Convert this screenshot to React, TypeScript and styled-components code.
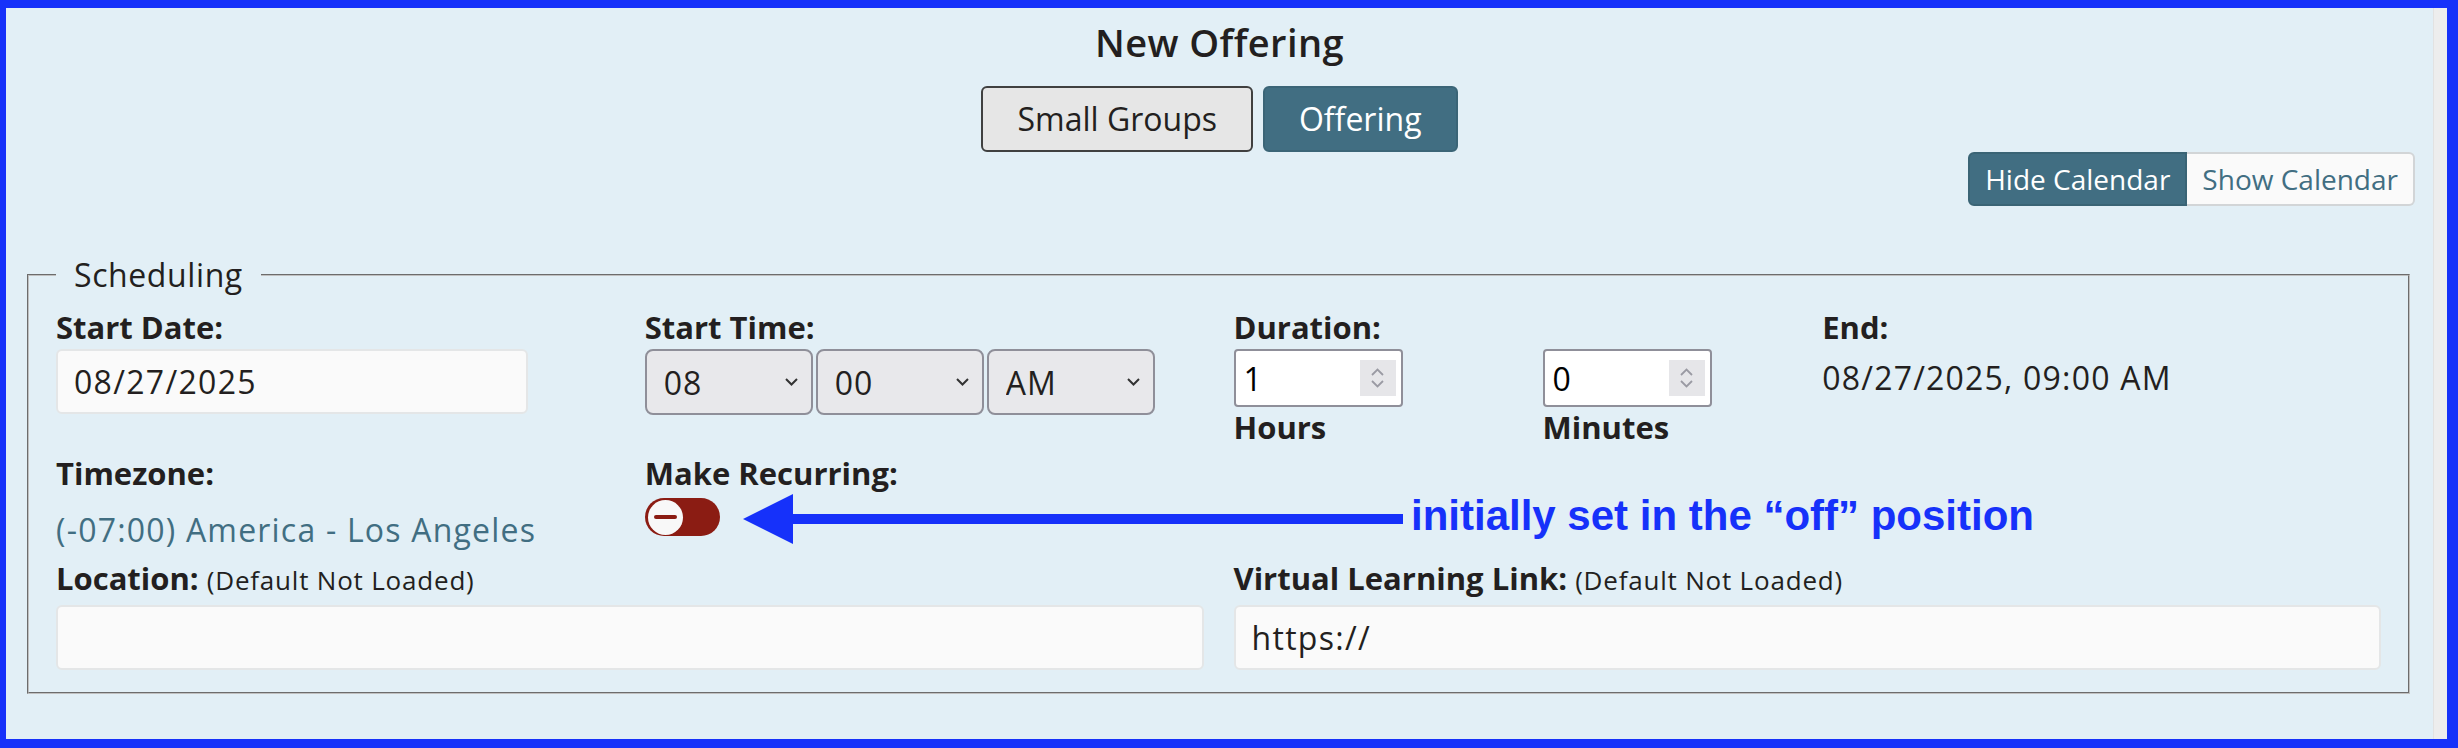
import React from "react";
import styled, { createGlobalStyle } from "styled-components";

const GlobalStyle = createGlobalStyle`
  html, body {
    margin: 0;
    padding: 0;
  }
  body {
    font-family: "Open Sans", "Liberation Sans", sans-serif;
    color: #231f20;
  }
  * {
    box-sizing: border-box;
  }
`;

const Frame = styled.div`
  position: relative;
  width: 2458px;
  height: 748px;
  border-style: solid;
  border-color: #1631fa;
  border-width: 8px 11px 9px 6px;
  display: flex;
  overflow: hidden;
`;

const Page = styled.main`
  flex: 1;
  min-width: 0;
  background: #e2eff6;
  display: flex;
  flex-direction: column;
`;

const ScrollTrack = styled.div`
  width: 14px;
  background: #ededed;
  border-left: 1px solid #e2e2e2;
`;

const Header = styled.header`
  display: flex;
  flex-direction: column;
  align-items: center;
  padding-top: 12px;
`;

const Title = styled.h1`
  margin: 0;
  font-size: 38px;
  line-height: 44px;
  font-weight: 600;
  letter-spacing: 0.4px;
  color: #231f20;
`;

const ModeGroup = styled.div`
  display: flex;
  gap: 10px;
  margin-top: 22px;
`;

const ModeButton = styled.button<{ $active?: boolean }>`
  font-family: inherit;
  font-size: 32px;
  line-height: 36px;
  padding: 13px 34px;
  border-radius: 6px;
  border: 2px solid ${(p) => (p.$active ? "#3b6577" : "#404040")};
  background: ${(p) => (p.$active ? "#416e82" : "#e6e6e6")};
  color: ${(p) => (p.$active ? "#ffffff" : "#231f20")};
`;

const CalendarBar = styled.div`
  display: flex;
  justify-content: flex-end;
  padding-right: 18px;
`;

const CalendarButton = styled.button<{ $active?: boolean }>`
  font-family: inherit;
  font-size: 28px;
  line-height: 34px;
  padding: 8px 15px;
  border: 2px solid ${(p) => (p.$active ? "#3a6475" : "#d2d5d7")};
  background: ${(p) => (p.$active ? "#416e82" : "#fafafa")};
  color: ${(p) => (p.$active ? "#ffffff" : "#416e82")};

  &:first-child {
    border-radius: 6px 0 0 6px;
  }
  &:last-child {
    border-left: none;
    border-radius: 0 6px 6px 0;
  }
`;

const Scheduling = styled.fieldset`
  margin: 51px 23px 0 21px;
  padding: 16px 27px 22px;
  border: 2px groove rgb(192, 192, 192);
  min-width: 0;
`;

const Legend = styled.legend`
  padding: 0 18px;
  font-size: 32px;
  line-height: 36px;
  letter-spacing: 0.6px;
  color: #231f20;
`;

const FieldGrid = styled.div<{ $cols: number; $gapBelow?: number }>`
  display: grid;
  grid-template-columns: repeat(${(p) => p.$cols}, 1fr);
  column-gap: 30px;
  margin-bottom: ${(p) => p.$gapBelow ?? 0}px;
`;

const DurationRow = styled.div`
  display: flex;
  gap: 140px;
`;

const Field = styled.div`
  display: flex;
  flex-direction: column;
  align-items: flex-start;
  min-width: 0;
`;

const Label = styled.label`
  display: block;
  font-size: 31px;
  line-height: 36px;
  font-weight: 700;
  color: #231f20;
  white-space: nowrap;
`;

const Note = styled.span`
  font-size: 26px;
  font-weight: 400;
  letter-spacing: 0.8px;
`;

const TextInput = styled.input<{ $width?: string; $gap?: number }>`
  display: block;
  width: ${(p) => p.$width ?? "100%"};
  height: 65px;
  margin-top: ${(p) => p.$gap ?? 4}px;
  padding: 0 16px;
  font-family: inherit;
  font-size: 32px;
  letter-spacing: 1.3px;
  color: #231f20;
  background: #fafafa;
  border: 2px solid #e4e6e7;
  border-radius: 6px;
  outline: none;
`;

const SelectRow = styled.div`
  display: flex;
  gap: 3px;
  margin-top: 4px;
`;

const SelectWrap = styled.div`
  position: relative;
  width: 168px;
`;

const Select = styled.select`
  appearance: none;
  width: 100%;
  height: 66px;
  padding: 0 40px 0 17px;
  font-family: inherit;
  font-size: 32px;
  letter-spacing: 1px;
  color: #231f20;
  background: #e8e8eb;
  border: 2px solid #8f8f99;
  border-radius: 8px;
  outline: none;
`;

const Chevron = styled.svg`
  position: absolute;
  right: 15px;
  top: 50%;
  transform: translateY(-50%);
  pointer-events: none;
`;

const NumberBox = styled.div`
  display: flex;
  align-items: center;
  width: 169px;
  height: 58px;
  margin-top: 4px;
  padding: 0 5px 0 8px;
  background: #ffffff;
  border: 2px solid #8f8f99;
  border-radius: 4px;
`;

const NumberInput = styled.input`
  flex: 1;
  min-width: 0;
  padding: 0;
  border: none;
  outline: none;
  background: transparent;
  font-family: inherit;
  font-size: 32px;
  color: #000000;
  appearance: textfield;

  &::-webkit-inner-spin-button,
  &::-webkit-outer-spin-button {
    -webkit-appearance: none;
    margin: 0;
  }
`;

const Spinner = styled.span`
  width: 36px;
  height: 36px;
  background: #e6e6e9;
  display: flex;
  flex-direction: column;
  align-items: center;
  justify-content: center;
  gap: 4px;
`;

const SubLabel = styled(Label)`
  margin-top: 2px;
`;

const Value = styled.div<{ $color?: string; $gap: number }>`
  margin-top: ${(p) => p.$gap}px;
  font-size: 32px;
  line-height: 36px;
  letter-spacing: 1.2px;
  color: ${(p) => p.$color ?? "#231f20"};
  white-space: nowrap;
`;

const Toggle = styled.button`
  width: 75px;
  height: 38px;
  margin-top: 7px;
  padding: 0 0 0 3px;
  border: none;
  border-radius: 19px;
  background: #8b1c13;
  display: flex;
  align-items: center;
`;

const Knob = styled.span`
  width: 35px;
  height: 35px;
  border-radius: 50%;
  background: #f8f8f8;
  display: flex;
  align-items: center;
  justify-content: center;
`;

const Minus = styled.span`
  width: 23px;
  height: 4px;
  border-radius: 2px;
  background: #8b1c13;
`;

const ArrowMark = styled.svg`
  position: absolute;
  left: 737px;
  top: 486px;
`;

const Callout = styled.div`
  position: absolute;
  left: 1405px;
  top: 484px;
  font-family: "Liberation Sans", Arial, sans-serif;
  font-weight: 700;
  font-size: 42px;
  line-height: 48px;
  color: #1631fa;
  white-space: nowrap;
`;

const ChevronDown = () => (
  <Chevron width="13" height="9" viewBox="0 0 13 9">
    <path d="M1 1.5 L6.5 7 L12 1.5" fill="none" stroke="#333" strokeWidth="2" />
  </Chevron>
);

interface TimeSelectProps {
  value: string;
  options: string[];
}

const TimeSelect = ({ value, options }: TimeSelectProps) => (
  <SelectWrap>
    <Select defaultValue={value}>
      {options.map((o) => (
        <option key={o}>{o}</option>
      ))}
    </Select>
    <ChevronDown />
  </SelectWrap>
);

const SpinIcons = () => (
  <Spinner>
    <svg width="13" height="8" viewBox="0 0 13 8">
      <path d="M1 7 L6.5 1.5 L12 7" fill="none" stroke="#9a9aa3" strokeWidth="1.8" />
    </svg>
    <svg width="13" height="8" viewBox="0 0 13 8">
      <path d="M1 1 L6.5 6.5 L12 1" fill="none" stroke="#9a9aa3" strokeWidth="1.8" />
    </svg>
  </Spinner>
);

const hours = ["01", "02", "03", "04", "05", "06", "07", "08", "09", "10", "11", "12"];
const minutes = ["00", "15", "30", "45"];

const App = () => (
  <>
    <GlobalStyle />
    <Frame>
      <Page>
        <Header>
          <Title>New Offering</Title>
          <ModeGroup>
            <ModeButton>Small Groups</ModeButton>
            <ModeButton $active>Offering</ModeButton>
          </ModeGroup>
        </Header>

        <CalendarBar>
          <CalendarButton $active>Hide Calendar</CalendarButton>
          <CalendarButton>Show Calendar</CalendarButton>
        </CalendarBar>

        <Scheduling>
          <Legend>Scheduling</Legend>

          <FieldGrid $cols={4} $gapBelow={10}>
            <Field>
              <Label>Start Date:</Label>
              <TextInput $width="472px" defaultValue="08/27/2025" />
            </Field>
            <Field>
              <Label>Start Time:</Label>
              <SelectRow>
                <TimeSelect value="08" options={hours} />
                <TimeSelect value="00" options={minutes} />
                <TimeSelect value="AM" options={["AM", "PM"]} />
              </SelectRow>
            </Field>
            <DurationRow>
              <Field>
                <Label>Duration:</Label>
                <NumberBox>
                  <NumberInput type="number" defaultValue={1} />
                  <SpinIcons />
                </NumberBox>
                <SubLabel>Hours</SubLabel>
              </Field>
              <Field>
                <Label>&nbsp;</Label>
                <NumberBox>
                  <NumberInput type="number" defaultValue={0} />
                  <SpinIcons />
                </NumberBox>
                <SubLabel>Minutes</SubLabel>
              </Field>
            </DurationRow>
            <Field>
              <Label>End:</Label>
              <Value $gap={15}>08/27/2025, 09:00 AM</Value>
            </Field>
          </FieldGrid>

          <FieldGrid $cols={4} $gapBelow={12}>
            <Field>
              <Label>Timezone:</Label>
              <Value $gap={21} $color="#416e82">
                (-07:00) America - Los Angeles
              </Value>
            </Field>
            <Field>
              <Label>Make Recurring:</Label>
              <Toggle aria-label="Make Recurring">
                <Knob>
                  <Minus />
                </Knob>
              </Toggle>
            </Field>
          </FieldGrid>

          <FieldGrid $cols={2}>
            <Field>
              <Label>
                Location: <Note>(Default Not Loaded)</Note>
              </Label>
              <TextInput $gap={7} />
            </Field>
            <Field>
              <Label>
                Virtual Learning Link: <Note>(Default Not Loaded)</Note>
              </Label>
              <TextInput $gap={7} defaultValue="https://" />
            </Field>
          </FieldGrid>
        </Scheduling>
      </Page>
      <ScrollTrack />

      <ArrowMark width="660" height="50" viewBox="0 0 660 50">
        <polygon points="0,25 50,0 50,50" fill="#1631fa" />
        <rect x="48" y="20" width="612" height="10" fill="#1631fa" />
      </ArrowMark>
      <Callout>initially set in the “off” position</Callout>
    </Frame>
  </>
);

export default App;
